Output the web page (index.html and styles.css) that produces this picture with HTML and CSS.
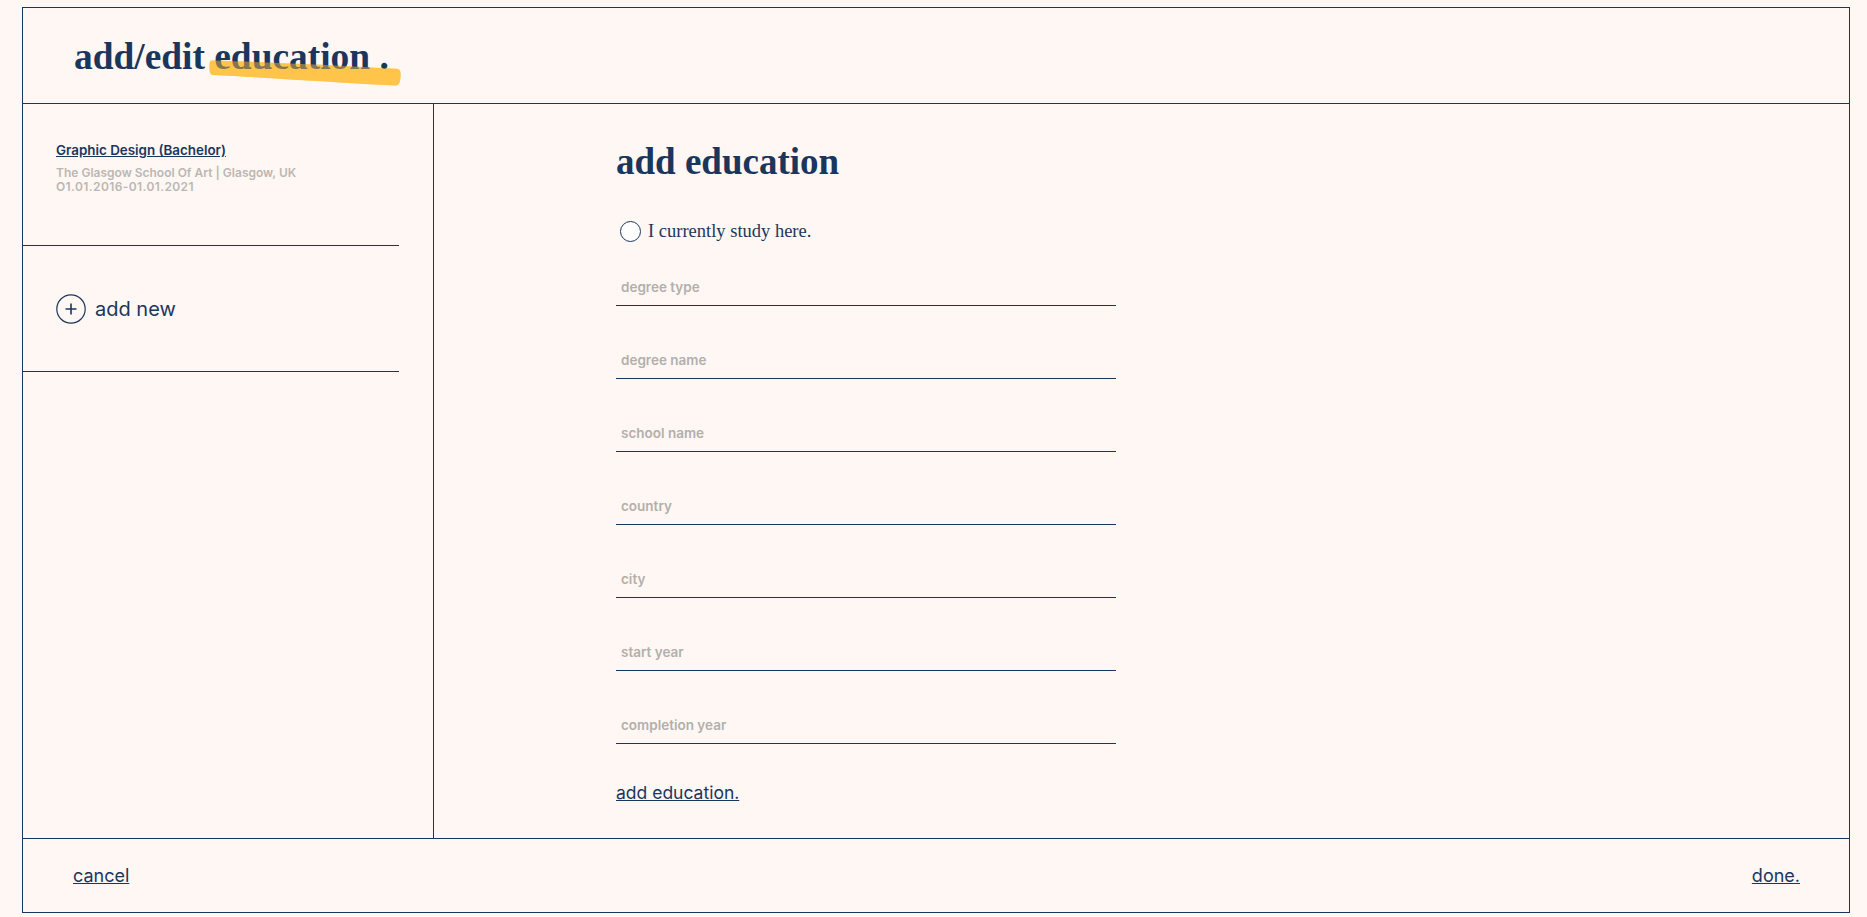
FILE: index.html
```html
<!DOCTYPE html>
<html lang="en">
<head>
<meta charset="utf-8">
<title>add/edit education</title>
<link rel="stylesheet" href="styles.css">
</head>
<body>
<div class="frame">
  <header class="header">
    <h1 class="title">add/edit <span class="hl">education .<svg class="brush brush-back" viewBox="0 0 192 27" preserveAspectRatio="none"><path d="M3 1.5 C60 3 130 6 188 9.5 C191 10 192 12 191.5 17 C191 23 190 25.5 186 25.5 C130 23 60 18 4 15.5 C1 15 0.5 13 0.5 8 C0.5 3 1 1.5 3 1.5 Z" fill="#ffc44a"/></svg><svg class="brush brush-front" viewBox="0 0 192 27" preserveAspectRatio="none"><path d="M3 1.5 C60 3 130 6 188 9.5 C191 10 192 12 191.5 17 C191 23 190 25.5 186 25.5 C130 23 60 18 4 15.5 C1 15 0.5 13 0.5 8 C0.5 3 1 1.5 3 1.5 Z" fill="#ffc44a"/></svg></span></h1>
  </header>
  <main class="main">
    <aside class="sidebar">
      <div class="entry">
        <a class="entry-title" href="#">Graphic Design (Bachelor)</a>
        <p class="entry-meta">The Glasgow School Of Art | Glasgow, UK</p>
        <p class="entry-meta entry-date">O1.01.2016-01.01.2021</p>
      </div>
      <div class="entry entry-add">
        <span class="plus"><svg viewBox="0 0 30 30" width="30" height="30"><circle cx="15" cy="15" r="14.2" fill="none" stroke="#1b365d" stroke-width="1.2"/><path d="M15 9.5 V20.5 M9.5 15 H20.5" stroke="#1b365d" stroke-width="1.6"/></svg></span>
        <span class="add-label">add new</span>
      </div>
    </aside>
    <section class="content">
      <h2 class="heading">add education</h2>
      <label class="check-row"><input type="checkbox" class="check"><span>I currently study here.</span></label>
      <form class="form">
        <input class="field" type="text" placeholder="degree type">
        <input class="field" type="text" placeholder="degree name">
        <input class="field" type="text" placeholder="school name">
        <input class="field" type="text" placeholder="country">
        <input class="field" type="text" placeholder="city">
        <input class="field" type="text" placeholder="start year">
        <input class="field" type="text" placeholder="completion year">
      </form>
      <a class="submit" href="#">add education.</a>
    </section>
  </main>
  <footer class="footer">
    <a class="foot-link" href="#">cancel</a>
    <a class="foot-link" href="#">done.</a>
  </footer>
</div>
</body>
</html>
```
FILE: styles.css
```css
* { box-sizing: border-box; }
html, body { margin: 0; padding: 0; }
body {
  background: #fff7f3;
  color: #1b365d;
  font-family: Inter, "Liberation Sans", sans-serif;
}
.frame {
  margin: 7px 17px 4px 22px;
  border: 1px solid #1b365d;
  height: 906px;
  display: flex;
  flex-direction: column;
}
.header {
  height: 96px;
  border-bottom: 1px solid #1b365d;
  display: flex;
  align-items: center;
  padding-left: 51px;
  flex: none;
}
.title {
  position: relative;
  z-index: 0;
  margin: 0;
  font-family: "Liberation Serif", "Times New Roman", serif;
  font-weight: 700;
  font-size: 37.4px;
  line-height: 1;
  color: #1b365d;
  padding-top: 2px;
}
.hl { position: relative; }
.brush {
  position: absolute;
  left: -5px;
  top: 23px;
  width: 192px;
  height: 28px;
  pointer-events: none;
}
.brush-back { z-index: -1; }
.brush-front { opacity: 0.45; }
.main {
  flex: 1;
  display: flex;
  border-bottom: 1px solid #1b365d;
  min-height: 0;
}
.sidebar {
  width: 411px;
  border-right: 1px solid #1b365d;
  flex: none;
}
.entry {
  width: 376px;
  border-bottom: 1px solid #1b365d;
  padding-left: 33px;
}
.entry:first-child {
  height: 142px;
  padding-top: 38px;
}
.entry-title {
  display: block;
  font-size: 13.4px;
  font-weight: 600;
  line-height: 16px;
  color: #1b365d;
  text-decoration: underline;
  margin-bottom: 8px;
}
.entry-meta {
  margin: 0;
  font-size: 12px;
  font-weight: 600;
  line-height: 14px;
  color: #bbb7b4;
}
.entry-date {
  letter-spacing: 0.4px;
}
.entry-add {
  height: 126px;
  display: flex;
  align-items: center;
  gap: 9px;
}
.plus { display: flex; width: 30px; height: 30px; }
.add-label { font-size: 20px; color: #1b365d; }
.content {
  flex: 1;
  padding: 38px 0 0 182px;
}
.heading {
  margin: 0;
  font-family: "Liberation Serif", "Times New Roman", serif;
  font-weight: 700;
  font-size: 37px;
  line-height: 40px;
  color: #1b365d;
}
.check-row {
  display: flex;
  align-items: center;
  gap: 7px;
  margin-top: 38px;
  height: 22px;
  font-family: "Liberation Serif", "Times New Roman", serif;
  font-size: 18.5px;
  color: #1b365d;
  padding-left: 4px;
}
.check {
  appearance: none;
  -webkit-appearance: none;
  margin: 0;
  width: 21px;
  height: 21px;
  border: 1.3px solid #1b365d;
  border-radius: 50%;
  background: #fff;
}
.form {
  margin-top: 27px;
  display: flex;
  flex-direction: column;
  gap: 36px;
}
.field {
  display: block;
  width: 500px;
  height: 37px;
  border: 0;
  border-bottom: 1px solid #1b365d;
  background: transparent;
  padding: 0 5px;
  font-family: Inter, "Liberation Sans", sans-serif;
  font-size: 13.5px;
  font-weight: 600;
  color: #1b365d;
  outline: none;
}
.field::placeholder { color: #b3afac; }
.submit {
  display: inline-block;
  margin-top: 38px;
  font-size: 17.5px;
  line-height: 22px;
  color: #1b365d;
  text-decoration: underline;
}
.footer {
  flex: none;
  height: 73px;
  display: flex;
  justify-content: space-between;
  align-items: center;
  padding: 0 49px 0 50px;
}
.foot-link {
  font-size: 18px;
  color: #1b365d;
  text-decoration: underline;
}
```
